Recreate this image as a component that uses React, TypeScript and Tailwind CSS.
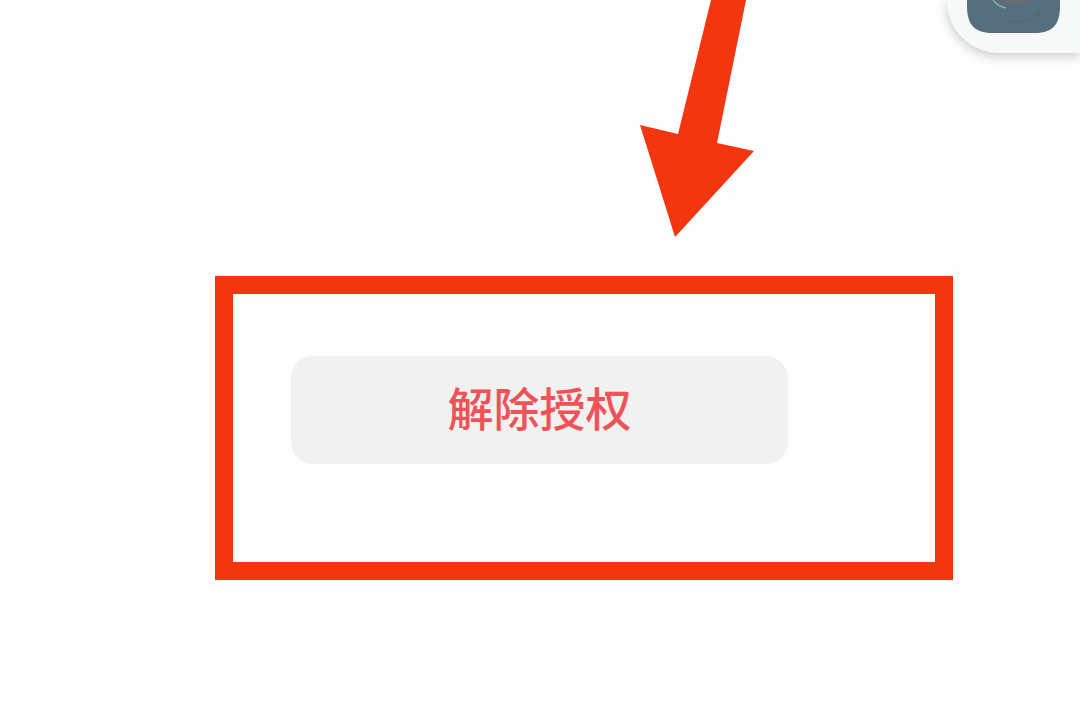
import React from "react";

const FloatingWidget = () => {
    return (
        <div className="absolute right-0 top-0 h-[53px] w-[133px] rounded-bl-[52px] bg-[#f7f8f8] pl-5 shadow-[0_3px_12px_rgba(0,0,0,0.22)]">
            <svg className="block" width="93" height="33" viewBox="0 0 93 33" aria-hidden="true">
                <path d="M0 0H93V6C93 24 86 33 68 33H25C7 33 0 24 0 6Z" fill="#566f7c" />
                <path d="M34 0H63C60 2 55 3 48 3C41 3 37 2 34 0Z" fill="#68706f" />
                <path d="M26 0C29 4 33 7 39 8" fill="none" stroke="#91a8b2" strokeWidth="1.5" />
                <path d="M40 21C55 24 68 19 73 11" fill="none" stroke="#4d6d7a" strokeWidth="2" />
            </svg>
        </div>
    );
};

const Arrow = () => {
    return (
        <svg className="ml-[640px] block shrink-0" width="114" height="237" viewBox="0 0 114 237" aria-hidden="true">
            <path d="M71 0H106L77 143L114 151L35 237L0 125L38 134Z" fill="#f43610" />
        </svg>
    );
};

const App = () => {
    return (
        <main className="relative min-h-screen overflow-hidden bg-[#fefefe] font-['Noto_Sans_CJK_SC',sans-serif]">
            <FloatingWidget />
            <Arrow />
            <section className="ml-[215px] mr-[127px] mt-[39px] border-[18px] border-[#f43610] pb-[98px] pl-[58px] pr-[147px] pt-[62px]">
                <button
                    type="button"
                    className="flex h-27 w-full items-center justify-center rounded-[22px] bg-[#f1f1f1] pb-2 text-[46px] leading-none font-medium text-[#ef5358]"
                >
                    解除授权
                </button>
            </section>
        </main>
    );
};

export default App;
